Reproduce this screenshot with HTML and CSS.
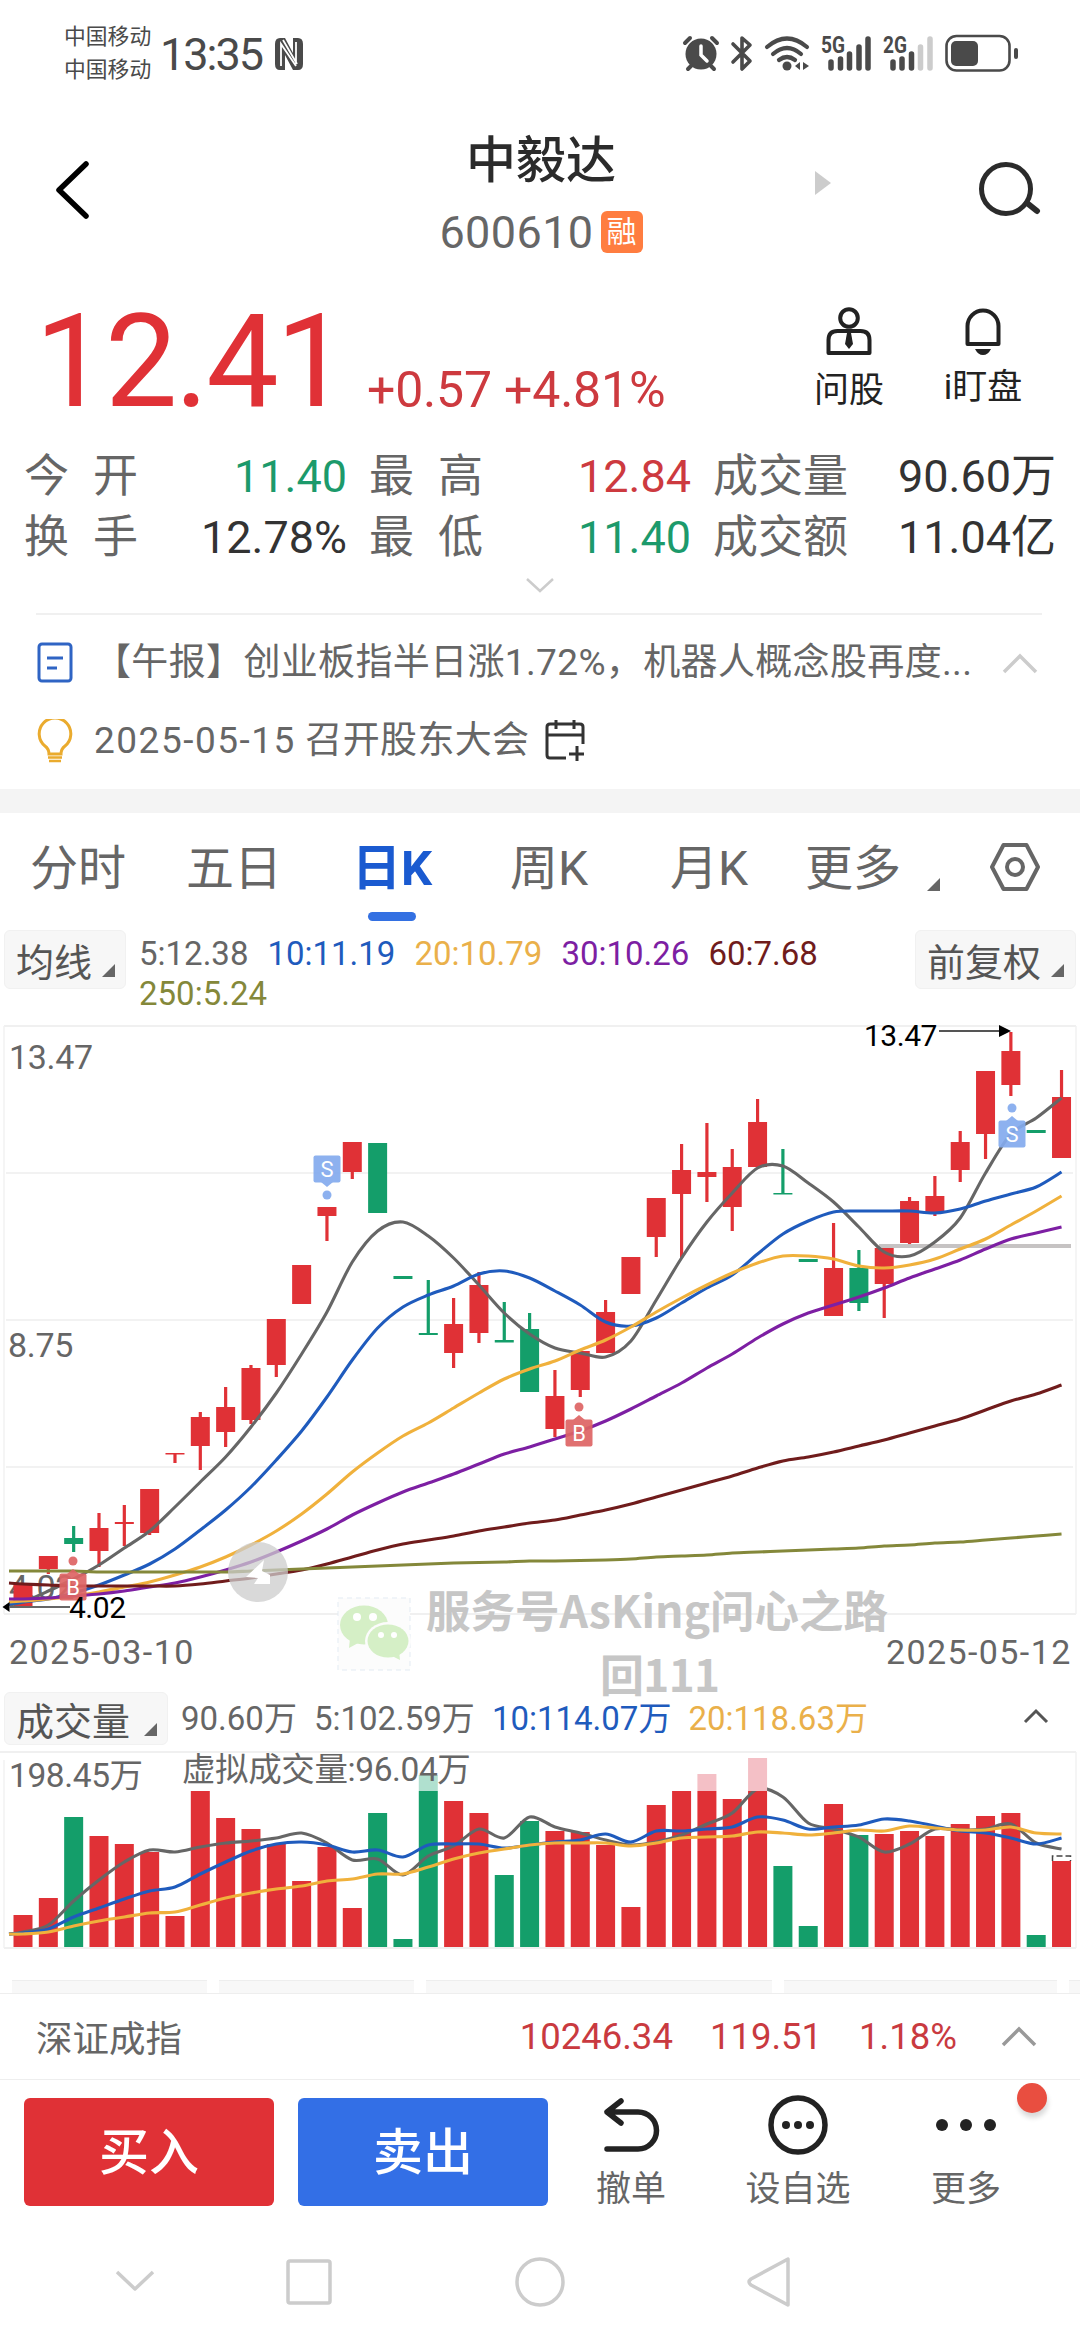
FILE: index.html
```html
<!DOCTYPE html>
<html lang="zh-CN">

<head>
  <meta charset="UTF-8">
  <meta name="viewport" content="width=device-width, initial-scale=1.0">
  <title>中毅达 600610</title>
  <link rel="stylesheet" href="styles.css">
</head>

<body>
  <div class="app">
    <div class="status-bar">
      <div class="carrier">
        <div>中国移动</div>
        <div>中国移动</div>
      </div>
      <div class="clock">13:35</div>
      <svg class="nfc" width="30" height="34" viewBox="0 0 30 34">
        <path d="M6 1h5l8 15V1h5q5 0 5 6v20q0 6-5 6h-5l-8-15v15H6q-5 0-5-6V7q0-6 5-6z" fill="#4a4a4a" />
        <path d="M7 29V7l15 22M22 27V5M9 3l14 24" fill="none" stroke="#fff" stroke-width="1.8" />
      </svg>
      <svg class="status-icons" width="370" height="70" viewBox="670 20 370 70">
        <g fill="#4a4a4a" stroke="#4a4a4a" stroke-linecap="round">
          <!-- alarm -->
          <circle cx="701" cy="54" r="15.5" stroke="none" />
          <path d="M685 43l5-5M717 43l-5-5M691 66l-3 3M711 66l3 3" stroke-width="4" fill="none" />
          <path d="M701 46v9l6 6" stroke="#fff" stroke-width="3.5" fill="none" />
          <!-- bluetooth -->
          <path d="M733 44l17 17-8 8V38l8 7-17 17" fill="none" stroke-width="3.6" stroke-linejoin="round" />
          <!-- wifi -->
          <path d="M767 47q20-17 40 0M773 54q14-12 28 0M779 60q8-6 16 0" fill="none" stroke-width="4.2" />
          <circle cx="787" cy="66" r="4.5" stroke="none" />
          <path d="M800 62v8l-5-4zM803 62v8l6-4z" stroke="none" />
          <!-- signal -->
          <path d="M831 62v6M840.500 59v9M849.500 54v14M859 47v21M868 39v29" stroke-width="5.500" />
          <path d="M893 62v6M902 59v9M911.500 54v14" stroke-width="5.500" />
          <path d="M920.500 47v21M930 39v29" stroke="#ccc" stroke-width="5.500" />
          <!-- battery -->
          <rect x="946.500" y="36" width="63" height="34.500" rx="10" fill="none" stroke-width="2.600" />
          <rect x="951" y="41" width="27" height="25" rx="5" stroke="none" />
          <path d="M1016 50v7" stroke-width="4" />
        </g>
        <text class="net" x="821" y="53" textLength="24" lengthAdjust="spacingAndGlyphs">5G</text>
        <text class="net" x="883" y="53" textLength="24" lengthAdjust="spacingAndGlyphs">2G</text>
      </svg>
    </div>

    <header class="header">
      <svg class="back" width="38" height="66" viewBox="0 0 38 66">
        <path d="M33 7L6 33l27 26" fill="none" stroke="#000" stroke-width="5.5" stroke-linecap="round" stroke-linejoin="round" />
      </svg>
      <div class="stock">
        <div class="stock-name">中毅达</div>
        <div class="stock-code">600610<span class="badge">融</span></div>
      </div>
      <div class="next"></div>
      <svg class="search" width="66" height="62" viewBox="0 0 66 62">
        <circle cx="29" cy="31" r="24.5" fill="none" stroke="#2b2b2b" stroke-width="5" />
        <path d="M50 45l10 8" stroke="#2b2b2b" stroke-width="6" stroke-linecap="round" />
      </svg>
    </header>

    <section class="quote">
      <div class="price">12.41</div>
      <div class="change">+0.57 +4.81%</div>
      <div class="quote-tool ask">
        <svg width="50" height="52" viewBox="0 0 50 52">
          <g fill="none" stroke="#222" stroke-width="4">
            <circle cx="25" cy="12" r="8.800" />
            <path d="M4.500 47V34q0-9 9-9h23q9 0 9 9v13z" stroke-linejoin="round" />
          </g>
          <path d="M23 27h4l2 11-4 5-4-5z" fill="#222" />
        </svg>
        <span>问股</span>
      </div>
      <div class="quote-tool watch">
        <svg width="50" height="52" viewBox="0 0 50 52">
          <path d="M9.500 38V20a15.500 15.500 0 0 1 31 0v18z" fill="none" stroke="#222" stroke-width="4" stroke-linejoin="round" />
          <path d="M17 43h16q-3 6-8 6t-8-6z" fill="#222" />
        </svg>
        <span>i盯盘</span>
      </div>
    </section>

    <section class="stats">
      <div class="stat"><div class="label wide"><span>今</span><span>开</span></div><b class="down">11.40</b></div>
      <div class="stat"><div class="label wide"><span>最</span><span>高</span></div><b class="up">12.84</b></div>
      <div class="stat"><div class="label">成交量</div><b>90.60万</b></div>
      <div class="stat"><div class="label wide"><span>换</span><span>手</span></div><b>12.78%</b></div>
      <div class="stat"><div class="label wide"><span>最</span><span>低</span></div><b class="down">11.40</b></div>
      <div class="stat"><div class="label">成交额</div><b>11.04亿</b></div>
    </section>
    <div class="expand">
      <svg width="30" height="18" viewBox="0 0 30 18"><path d="M2 3l13 12L28 3" fill="none" stroke="#ccc" stroke-width="2.500" /></svg>
    </div>

    <section class="news">
      <div class="news-row">
        <svg class="news-icon" width="36" height="42" viewBox="0 0 36 42">
          <rect x="2" y="2" width="32" height="37" rx="3" fill="none" stroke="#2f64c4" stroke-width="3" />
          <path d="M10 16h16M10 26h10" stroke="#2f64c4" stroke-width="3" />
        </svg>
        <div class="news-text">【午报】创业板指半日涨1.72%，机器人概念股再度...</div>
        <svg class="fold" width="36" height="22" viewBox="0 0 36 22"><path d="M2 20L18 4l16 16" fill="none" stroke="#ccc" stroke-width="3.500" /></svg>
      </div>
      <div class="news-row second">
        <svg class="news-icon" width="36" height="44" viewBox="0 0 36 44">
          <path d="M12 35q0-5-4-8a15.800 15.800 0 1 1 20 0q-4 3-4 8z" fill="none" stroke="#eaab2e" stroke-width="3" />
          <path d="M11 38.500h14M12 42h12" stroke="#eaab2e" stroke-width="2.500" />
        </svg>
        <div class="news-text"><span class="date">2025-05-15</span> 召开股东大会</div>
        <svg class="calendar" width="42" height="42" viewBox="0 0 42 42">
          <g fill="none" stroke="#333" stroke-width="3">
            <path d="M22 38H6q-3 0-3-3V7q0-3 3-3h30q3 0 3 3v17M3 15h36M12 0v9M30 0v9" />
            <path d="M33 26v15M25 34h15" />
          </g>
        </svg>
      </div>
    </section>

    <nav class="tabs">
      <div class="tab">分时</div>
      <div class="tab">五日</div>
      <div class="tab active">日K</div>
      <div class="tab week">周K</div>
      <div class="tab month">月K</div>
      <div class="tab more">更多</div>
      <i class="corner"></i>
      <svg class="gear" width="52" height="50" viewBox="0 0 52 50">
        <path d="M14.500 3h23L49 25 37.500 47h-23L3 25z" fill="none" stroke="#666" stroke-width="4" stroke-linejoin="round" />
        <circle cx="26" cy="25" r="8" fill="none" stroke="#666" stroke-width="4" />
      </svg>
    </nav>

    <section class="ma-bar">
      <div class="drop ma-drop">均线<i class="corner"></i></div>
      <div class="ma-values">
        <span class="c5">5:12.38</span>
        <span class="c10">10:11.19</span>
        <span class="c20">20:10.79</span>
        <span class="c30">30:10.26</span>
        <span class="c60">60:7.68</span>
        <span class="c250">250:5.24</span>
      </div>
      <div class="drop adjust-drop">前复权<i class="corner"></i></div>
    </section>

    <svg class="chart" id="kline" width="1080" height="670" viewBox="0 1018 1080 670"></svg>

    <section class="vol-bar">
      <div class="drop vol-drop">成交量<i class="corner"></i></div>
      <div class="vol-values">
        <span class="c5">90.60万</span>
        <span class="c5">5:102.59万</span>
        <span class="c10">10:114.07万</span>
        <span class="c20">20:118.63万</span>
      </div>
      <svg class="vol-fold" width="26" height="16" viewBox="0 0 26 16"><path d="M2 14L13 3l11 11" fill="none" stroke="#555" stroke-width="3" /></svg>
    </section>

    <svg class="chart" id="volume" width="1080" height="230" viewBox="0 1748 1080 230"></svg>

    <div class="peek">
      <div class="w195"></div>
      <div class="w195"></div>
      <div class="w346"></div>
      <div class="w273"></div>
      <div class="w195"></div>
    </div>

    <section class="index-row">
      <div class="index-name">深证成指</div>
      <div class="index-values"><span>10246.34</span><span>119.51</span><span>1.18%</span></div>
      <svg width="36" height="22" viewBox="0 0 36 22"><path d="M2 19L18 3l16 16" fill="none" stroke="#999" stroke-width="3.500" /></svg>
    </section>

    <footer class="actions">
      <div class="btn buy">买入</div>
      <div class="btn sell">卖出</div>
      <div class="action cancel">
        <svg width="64" height="62" viewBox="0 0 64 62">
          <path d="M22 7L8 18l14 11M8 18h31a18.500 18.500 0 0 1 0 37H8" fill="none" stroke="#222" stroke-width="5.500" stroke-linecap="round" stroke-linejoin="round" />
        </svg>
        <span>撤单</span>
      </div>
      <div class="action favor">
        <svg width="64" height="62" viewBox="0 0 64 62">
          <circle cx="32" cy="31" r="27" fill="none" stroke="#222" stroke-width="5.500" />
          <g fill="#222"><circle cx="20" cy="31" r="4" /><circle cx="32" cy="31" r="4" /><circle cx="44" cy="31" r="4" /></g>
        </svg>
        <span>设自选</span>
      </div>
      <div class="action more-action">
        <svg width="64" height="62" viewBox="0 0 64 62">
          <g fill="#222"><circle cx="8" cy="31" r="6" /><circle cx="32" cy="31" r="6" /><circle cx="56" cy="31" r="6" /></g>
        </svg>
        <span>更多</span>
        <i class="red-dot"></i>
      </div>
    </footer>

    <div class="sys-nav">
      <svg width="1080" height="60" viewBox="0 2252 1080 60">
        <g fill="none" stroke="#ccc" stroke-width="3.500" stroke-linejoin="round">
          <path d="M117 2272l18 17 18-17" />
          <rect x="288" y="2261" width="42" height="42" rx="2" />
          <circle cx="540" cy="2282" r="23" />
          <path d="M788 2259v46l-37-20q-4-3 0-6z" />
        </g>
      </svg>
    </div>
  </div>

  <script>
    const RED = "#e03136";
    const GREEN = "#149e6a";
    const GRAY = "#666";
    const BLUE = "#1f5bbd";
    const YELLOW = "#f0b13c";
    const PURPLE = "#7d1fa3";
    const MAROON = "#701c1c";
    const OLIVE = "#84883a";

    // x position of the centre of a candle
    const cx = (i) => 23 + i * 25.33;

    // [colour, high, top, bottom, low]
    const candles = [
      ["r", 1583, 1583, 1607, 1607], ["r", 1556, 1556, 1569, 1574], ["g", 1526, 1538, 1544, 1552],
      ["r", 1513, 1528, 1551, 1567], ["r", 1505, 1522, 1524, 1546], ["r", 1489, 1489, 1533, 1535],
      ["r", 1453, 1453, 1454.5, 1463], ["r", 1412, 1417, 1446, 1470], ["r", 1387, 1407, 1432, 1447],
      ["r", 1365, 1368, 1420, 1424], ["r", 1319, 1319, 1365, 1377], ["r", 1265, 1265, 1304, 1304],
      ["r", 1207, 1207, 1216, 1241], ["r", 1142, 1142, 1172, 1179], ["g", 1143, 1143, 1213, 1213],
      ["g", 1276, 1276, 1279, 1279], ["g", 1280, 1333, 1335, 1335], ["r", 1298, 1324, 1353, 1368],
      ["r", 1272, 1285, 1333, 1343], ["g", 1302, 1340, 1342.5, 1342], ["g", 1313, 1329, 1392, 1392],
      ["r", 1370, 1396, 1429, 1437], ["r", 1351, 1351, 1390, 1397], ["r", 1300, 1312, 1353, 1353],
      ["r", 1257, 1257, 1294, 1294], ["r", 1198, 1198, 1237, 1257], ["r", 1144, 1170, 1194, 1258],
      ["r", 1123, 1172, 1177, 1202], ["r", 1149, 1167, 1207, 1231], ["r", 1099, 1122, 1167, 1167],
      ["g", 1149, 1193, 1194.5, 1194], ["g", 1259, 1259, 1262, 1262], ["r", 1223, 1268, 1316, 1316],
      ["g", 1250, 1268, 1303, 1311], ["r", 1248, 1248, 1284, 1318], ["r", 1197, 1201, 1243, 1245],
      ["r", 1176, 1196, 1212, 1216], ["r", 1131, 1142, 1170, 1182], ["r", 1071, 1071, 1134, 1159],
      ["r", 1032, 1051, 1085, 1096], ["g", 1130, 1130, 1133, 1133], ["r", 1070, 1097, 1158, 1158]
    ];

    const ma5 = [1602, 1591, 1579, 1565, 1548, 1531, 1507, 1482, 1457, 1427, 1393, 1354, 1312, 1262, 1231, 1222, 1236, 1258, 1285, 1313, 1334, 1348, 1353, 1357, 1341, 1300, 1258, 1222, 1193, 1168, 1166, 1183, 1202, 1227, 1252, 1256, 1242, 1218, 1173, 1134, 1118, 1098];
    const ma10 = [1602, 1599, 1593, 1585, 1575, 1564, 1549, 1530, 1510, 1487, 1460, 1431, 1397, 1360, 1328, 1307, 1295, 1286, 1274, 1271, 1278, 1291, 1305, 1322, 1326, 1318, 1303, 1288, 1275, 1254, 1234, 1221, 1212, 1211, 1211, 1211, 1213, 1209, 1201, 1194, 1187, 1172];
    const ma20 = [1601, 1599, 1596, 1592, 1587, 1582, 1575, 1567, 1557, 1545, 1531, 1514, 1494, 1472, 1453, 1436, 1423, 1408, 1393, 1379, 1369, 1361, 1350, 1340, 1327, 1312, 1298, 1285, 1273, 1263, 1256, 1256, 1259, 1266, 1268, 1265, 1259, 1249, 1239, 1225, 1211, 1196];
    const ma30 = [1599, 1598, 1596, 1594, 1591, 1587, 1583, 1577, 1570, 1562, 1552, 1541, 1529, 1515, 1503, 1492, 1483, 1474, 1464, 1454, 1447, 1439, 1431, 1421, 1409, 1396, 1383, 1368, 1354, 1338, 1324, 1313, 1305, 1297, 1288, 1278, 1269, 1260, 1249, 1239, 1233, 1227];
    const ma60 = [1584, 1585, 1586, 1586, 1586, 1586, 1586, 1584, 1581, 1578, 1574, 1570, 1564, 1557, 1550, 1544, 1540, 1536, 1531, 1527, 1523, 1520, 1515, 1510, 1504, 1497, 1490, 1483, 1476, 1468, 1461, 1457, 1452, 1446, 1440, 1433, 1426, 1419, 1410, 1401, 1394, 1385];
    const ma250 = [1571, 1571, 1571, 1572, 1572, 1572, 1572, 1572, 1572, 1571, 1570, 1569, 1568, 1567, 1566, 1565, 1564, 1563, 1562.5, 1562, 1561, 1561, 1560.5, 1560, 1559, 1557, 1556, 1555, 1553, 1552, 1551, 1550, 1549, 1548, 1546, 1545, 1543, 1542, 1540, 1538, 1536, 1534];

    // top of every volume bar, base line is 1947
    const vols = [1915, 1898, 1817, 1836, 1844, 1852, 1916, 1791, 1818, 1829, 1844, 1881, 1847, 1908, 1813, 1939, 1791, 1801, 1813, 1875, 1821, 1831, 1832, 1845, 1907, 1805, 1791, 1791, 1799, 1791, 1866, 1926, 1804, 1835, 1834, 1831, 1836, 1824, 1816, 1813, 1935, 1861];
    const overflow = { 16: 1775, 27: 1774, 29: 1758 };
    const vol5 = [1932, 1925, 1901, 1880, 1862, 1850, 1852, 1847, 1843, 1841, 1838, 1833, 1843, 1860, 1859, 1875, 1856, 1846, 1829, 1838, 1817, 1827, 1833, 1840, 1845, 1842, 1835, 1824, 1813, 1789, 1797, 1823, 1829, 1837, 1852, 1844, 1829, 1830, 1829, 1824, 1843, 1849];
    const vol10 = [1933, 1929, 1917, 1908, 1899, 1891, 1887, 1874, 1862, 1851, 1844, 1842, 1845, 1852, 1850, 1857, 1845, 1844, 1844, 1848, 1845, 1842, 1840, 1834, 1842, 1831, 1831, 1829, 1827, 1817, 1820, 1829, 1827, 1825, 1819, 1821, 1826, 1831, 1833, 1838, 1844, 1838];
    const vol20 = [1934, 1932, 1926, 1921, 1917, 1913, 1912, 1905, 1898, 1893, 1889, 1886, 1881, 1879, 1874, 1874, 1867, 1859, 1853, 1849, 1845, 1843, 1843, 1843, 1846, 1843, 1838, 1837, 1836, 1832, 1833, 1835, 1833, 1830, 1831, 1826, 1828, 1830, 1830, 1827, 1833, 1834];

    const color = (c) => (c === "r" ? RED : GREEN);
    const rect = (x, y, w, h, fill, extra = "") => `<rect x="${x}" y="${y}" width="${w}" height="${h}" fill="${fill}" ${extra}/>`;
    const line = (x1, y1, x2, y2, stroke, w) => `<line x1="${x1}" y1="${y1}" x2="${x2}" y2="${y2}" stroke="${stroke}" stroke-width="${w}"/>`;
    const text = (x, y, cls, str, extra = "") => `<text x="${x}" y="${y}" class="${cls}" ${extra}>${str}</text>`;

    // smooth curve through the values
    function curve(ys, stroke, first) {
      const p = ys.map((y, i) => [cx(i), y]);
      p.unshift([9, first]);
      let d = `M${p[0]}`;
      for (let i = 0; i < p.length - 1; i++) {
        const a = p[i - 1] || p[i], b = p[i], c = p[i + 1], e = p[i + 2] || c;
        const k = 6.5;
        d += `C${b[0] + (c[0] - a[0]) / k} ${b[1] + (c[1] - a[1]) / k} ${c[0] - (e[0] - b[0]) / k} ${c[1] - (e[1] - b[1]) / k} ${c[0]} ${c[1]}`;
      }
      return `<path d="${d}" fill="none" stroke="${stroke}" stroke-width="3.1"/>`;
    }

    // buy / sell flag, dir -1 has the dot above the box, 1 below
    function flag(x, y, letter, dir) {
      const fill = letter === "S" ? "#84abee" : "#de6464";
      const edge = y + dir * 13;
      return `<g opacity="0.92">${rect(x - 13.5, y - 13.5, 27, 27, fill, 'rx="2"')}
        <path d="M${x - 6} ${edge}L${x} ${edge + dir * 5}L${x + 6} ${edge}z" fill="${fill}"/>
        <circle cx="${x}" cy="${y + dir * 26}" r="4.5" fill="${fill}"/></g>
        ${text(x, y + 8, "flag", letter)}`;
    }

    function drawKline() {
      let s = "";
      [1026, 1614].forEach((y) => s += line(4, y, 1076, y, "#f0f0f0", 2));
      [1173, 1320, 1467].forEach((y) => s += line(6, y, 1073, y, "#f2f2f2", 2));
      s += line(4, 1026, 4, 1614, "#f2f2f2", 1.5) + line(1076, 1026, 1076, 1614, "#f2f2f2", 1.5);

      // watermark
      s += `<rect x="338" y="1598" width="72" height="72" fill="#fcfcfc" stroke="#e3ebf3" stroke-dasharray="5 4"/>
        <g fill="#d5efc6">
          <ellipse cx="364" cy="1625" rx="24" ry="19.5"/><path d="M350 1638l-1 10 11-6z"/>
          <ellipse cx="388" cy="1641" rx="23" ry="19" fill="#fcfcfc"/>
          <ellipse cx="388" cy="1641" rx="20.500" ry="16.500"/><path d="M392 1656l8 4-1-9z"/>
        </g>
        <g fill="#fff"><circle cx="357" cy="1617" r="4"/><circle cx="373" cy="1617" r="4"/>
          <circle cx="381" cy="1635" r="3"/><circle cx="394" cy="1635" r="3"/></g>`;
      s += text(426, 1628, "mark", "服务号AsKing问心之路", 'textLength="462" lengthAdjust="spacingAndGlyphs"');
      s += text(600, 1692, "mark", "回111", 'textLength="120"');

      s += text(9, 1599, "axis", "4.02");
      candles.forEach(([c, hi, top, bottom, lo], i) => {
        s += line(cx(i), hi, cx(i), lo, color(c), 3.2);
        s += rect(cx(i) - 9.5, top, 19, bottom - top, color(c));
      });
      s += line(879, 1246, 1071, 1246, "#c6c3c3", 4);
      s += curve(ma5, GRAY, 1605) + curve(ma10, BLUE, 1604) + curve(ma20, YELLOW, 1602)
        + curve(ma30, PURPLE, 1599) + curve(ma60, MAROON, 1583) + curve(ma250, OLIVE, 1571);
      s += flag(327, 1169, "S", 1) + flag(1012, 1134, "S", -1) + flag(73, 1587, "B", -1) + flag(579, 1433, "B", -1);

      s += text(9, 1069, "axis", "13.47") + text(8, 1357, "axis", "8.75");
      s += text(9, 1664, "axis", "2025-03-10", 'textLength="184"');
      s += text(886, 1664, "axis", "2025-05-12", 'textLength="184"');

      // highest and lowest price
      s += text(864, 1046, "peak", "13.47") + line(939, 1031, 1000, 1031, "#555", 1.8);
      s += `<path d="M999 1025v12l12-6z"/><path d="M9.500 1602v10l-7-5z"/>`;
      s += line(9, 1607, 70, 1607, "#666", 1.8) + text(69, 1618, "peak", "4.02");

      // floating handle
      s += `<circle cx="258" cy="1572" r="30" fill="#ccc" opacity="0.75"/>
        <path d="M264 1560l-2 11 8 4v9h-16l4-6-12-1z" fill="#fff"/>`;
      document.getElementById("kline").innerHTML = s;
    }

    function drawVolume() {
      let s = line(0, 1752, 1076, 1752, "#f0f0f0", 2) + line(4, 1948, 1076, 1948, "#f0f0f0", 2);
      s += line(4, 1760, 4, 1948, "#f2f2f2", 1.5) + line(1076, 1752, 1076, 1948, "#f2f2f2", 1.5);
      s += text(9, 1787, "axis vol", "198.45万");
      vols.forEach((y, i) => s += rect(cx(i) - 9.5, y, 19, 1947 - y, color(candles[i][0])));
      s += curve(vol5, GRAY, 1934) + curve(vol10, BLUE, 1934) + curve(vol20, YELLOW, 1934);
      for (const i in overflow) {
        s += rect(cx(+i) - 9.5, overflow[i], 19, 1791 - overflow[i], candles[i][0] === "r" ? "#f4c0c6" : "#b0e0cf");
      }
      s += text(182, 1781, "axis vol", "虚拟成交量:96.04万");
      s += `<path d="M1052.500 1861v-5h18v5" fill="none" stroke="#444" stroke-width="1.500" stroke-dasharray="6 3"/>`;
      document.getElementById("volume").innerHTML = s;
    }

    drawKline();
    drawVolume();
  </script>
</body>

</html>
```

FILE: styles.css
```css
* {
  padding: 0;
  margin: 0;
  box-sizing: border-box;
}

body {
  background-color: #fff;
  font-family: Roboto, "Noto Sans CJK SC", sans-serif;
  color: #333;
}

.app {
  width: 1080px;
  height: 2340px;
  overflow: hidden;
  display: flex;
  flex-direction: column;
}

.app > * {
  flex-shrink: 0;
}

svg {
  display: block;
  flex-shrink: 0;
}

.chart {
  overflow: visible;
}

/* status bar */
.status-bar {
  display: flex;
  height: 110px;
  padding: 20px 40px 0 64px;
  color: #4a4a4a;
}

.carrier {
  width: 96px;
  font-size: 21.8px;
  line-height: 33px;
}

.clock {
  width: 114px;
  font-size: 45px;
  line-height: 70px;
  letter-spacing: -2px;
}

.nfc {
  margin-top: 17px;
}

.status-icons {
  margin-left: auto;
}

.net {
  font-size: 23px;
  font-weight: 700;
  fill: #4a4a4a;
}

/* title */
.header {
  display: flex;
  height: 170px;
}

.back {
  margin: 47px 0 0 53px;
}

.stock {
  width: 280px;
  margin-left: 310px;
  text-align: center;
}

.stock-name {
  margin-top: 15px;
  font-size: 50px;
  font-weight: 500;
  line-height: 72px;
  color: #2b2b2b;
}

.stock-code {
  display: flex;
  justify-content: center;
  align-items: center;
  height: 72px;
  margin-top: -1px;
  font-size: 45px;
  letter-spacing: 0.4px;
  color: #666;
}

.badge {
  width: 42px;
  height: 42px;
  margin-left: 7px;
  border-radius: 6px;
  background-color: #ff7d40;
  color: #fff;
  font-size: 30px;
  line-height: 41px;
}

.next {
  width: 0;
  height: 0;
  margin: 61px 0 0 134px;
  border-left: 16px solid #ccc;
  border-top: 12px solid transparent;
  border-bottom: 12px solid transparent;
}

.search {
  margin: 48px 0 0 146px;
}

/* price */
.quote {
  display: flex;
  height: 165px;
  color: #222;
}

.price {
  width: 327px;
  margin-left: 35px;
  font-size: 129px;
  line-height: 163px;
  letter-spacing: -2.6px;
  color: #e03136;
}

.change {
  width: 430px;
  margin-left: 5px;
  padding-top: 74px;
  font-size: 50px;
  line-height: 72px;
  letter-spacing: -0.2px;
  color: #cd3a3f;
}

.quote-tool {
  display: flex;
  flex-direction: column;
  align-items: center;
  width: 104px;
  padding-top: 26px;
  font-size: 35px;
  line-height: 65px;
}

.watch {
  margin-left: 30px;
  line-height: 60px;
}

/* stats */
.stats {
  display: grid;
  grid-template-columns: 323px 322px 343px;
  column-gap: 22px;
  padding: 1px 0 0 24px;
}

.stat {
  display: flex;
  justify-content: space-between;
  font-size: 45px;
  line-height: 61px;
}

.label {
  color: #666;
}

.label.wide {
  display: flex;
  justify-content: space-between;
  width: 114px;
}

.stat b {
  font-weight: 400;
}

.stat .up {
  color: #cd3a3f;
}

.stat .down {
  color: #1c9a6b;
}

.expand {
  display: flex;
  justify-content: center;
  height: 45px;
  padding-top: 8px;
}

/* news */
.news {
  height: 200px;
  border-bottom: 24px solid #f4f4f4;
  color: #666;
}

.news::before {
  content: "";
  display: block;
  height: 2px;
  margin: 0 38px 8px 36px;
  background-color: #f0f0f0;
}

.news-row {
  display: flex;
  align-items: center;
  height: 80px;
  padding-left: 37px;
}

.news-row.second {
  height: 76px;
}

.news-text {
  margin-left: 21px;
  font-size: 37px;
  line-height: 50px;
  letter-spacing: 0.35px;
  white-space: nowrap;
}

.news-text .date {
  letter-spacing: 1.5px;
}

.fold {
  margin-left: auto;
  margin-right: 42px;
}

.calendar {
  margin-left: 15px;
}

/* period tabs */
.tabs {
  display: flex;
  height: 110px;
  color: #666;
}

.tab {
  position: relative;
  width: 156px;
  text-align: center;
  font-size: 48px;
  line-height: 111px;
}

.tab.active {
  width: 160px;
  color: #1a5ad0;
  font-size: 49px;
  font-weight: 700;
}

.tab.active::after {
  content: "";
  position: absolute;
  left: 56px;
  bottom: 2px;
  width: 48px;
  height: 9px;
  border-radius: 5px;
  background-color: #3370e2;
}

.tab.week {
  width: 154px;
}

.tab.month {
  width: 166px;
}

.tab.more {
  width: 122px;
}

.corner {
  width: 13px;
  height: 13px;
  background-color: #666;
  clip-path: polygon(100% 0, 100% 100%, 0 100%);
}

.tabs .corner {
  margin: 65px 0 0 13px;
}

.gear {
  margin: 29px 0 0 49px;
}

/* moving averages */
.ma-bar {
  display: flex;
  height: 95px;
  padding: 7px 4px 0;
}

.drop {
  display: flex;
  align-items: center;
  height: 59px;
  padding-left: 11px;
  border: 1px solid #f1f1f1;
  border-radius: 6px;
  background-color: #f7f7f7;
  font-size: 38px;
  color: #555;
}

.drop .corner {
  margin: 22px 0 0 10px;
}

.ma-drop {
  width: 122px;
}

.adjust-drop {
  width: 161px;
  margin-left: auto;
}

.ma-values {
  display: flex;
  flex-wrap: wrap;
  align-content: flex-start;
  column-gap: 19px;
  width: 700px;
  margin-left: 13px;
  padding-top: 4px;
  font-size: 33px;
  line-height: 40px;
}

.c5 {
  color: #666;
}

.c10 {
  color: #1f5bbd;
}

.c20 {
  color: #eab04a;
}

.c30 {
  color: #7d1fa3;
}

.c60 {
  color: #701c1c;
}

.c250 {
  color: #84883a;
}

/* svg text */
.axis {
  font-size: 34px;
  letter-spacing: -0.3px;
  fill: #666;
}

.axis.vol {
  font-size: 33.5px;
  letter-spacing: -0.4px;
}

.peak {
  font-size: 30px;
  letter-spacing: -0.5px;
  fill: #000;
}

.mark {
  font-family: "Noto Sans CJK SC", sans-serif;
  font-size: 44px;
  font-weight: 700;
  fill: #c6c6c6;
}

.flag {
  font-size: 22px;
  text-anchor: middle;
  fill: #fff;
}

/* volume */
.vol-bar {
  display: flex;
  height: 60px;
  padding: 4px 31px 0 4px;
}

.vol-drop {
  width: 164px;
  height: 53px;
}

.vol-drop .corner {
  margin-left: 14px;
}

.vol-values {
  display: flex;
  gap: 17px;
  margin-left: 13px;
  font-size: 33px;
  line-height: 54px;
}

.vol-fold {
  margin: 16px 0 0 auto;
}

/* tabs hidden below the index row */
.peek {
  display: flex;
  gap: 12px;
  height: 15px;
  padding: 2px 0 0 12px;
  overflow: hidden;
}

.peek div {
  flex-shrink: 0;
  border-top: 1px solid #eee;
  background-color: #f8f8f8;
}

.w195 {
  width: 195px;
}

.w346 {
  width: 346px;
}

.w273 {
  width: 273px;
}

.index-row {
  display: flex;
  align-items: center;
  height: 87px;
  padding: 0 43px 0 36px;
  border-top: 1px solid #eee;
  border-bottom: 1px solid #eee;
  font-size: 36.5px;
}

.index-name {
  color: #666;
}

.index-values {
  display: flex;
  gap: 37px;
  margin-left: auto;
  margin-right: 44px;
  color: #c93a40;
}

/* bottom actions */
.actions {
  display: flex;
  height: 160px;
  padding: 18px 0 0 24px;
}

.btn {
  width: 250px;
  height: 108px;
  margin-right: 24px;
  border-radius: 6px;
  color: #fff;
  font-size: 50px;
  font-weight: 500;
  line-height: 111px;
  text-align: center;
}

.buy {
  background-color: #e03136;
}

.sell {
  background-color: #336fe6;
}

.action {
  position: relative;
  display: flex;
  flex-direction: column;
  align-items: center;
  width: 110px;
  margin-top: -4px;
  font-size: 35px;
  line-height: 67px;
  color: #666;
}

.cancel {
  margin-left: 4px;
}

.favor {
  margin-left: 57px;
}

.more-action {
  margin-left: 58px;
}

.red-dot {
  position: absolute;
  top: -11px;
  left: 106px;
  width: 30px;
  height: 30px;
  border-radius: 50%;
  background-color: #e94e40;
  box-shadow: 1px 5px 5px rgba(0, 0, 0, 0.15);
}

.sys-nav {
  padding-top: 12px;
}
```
